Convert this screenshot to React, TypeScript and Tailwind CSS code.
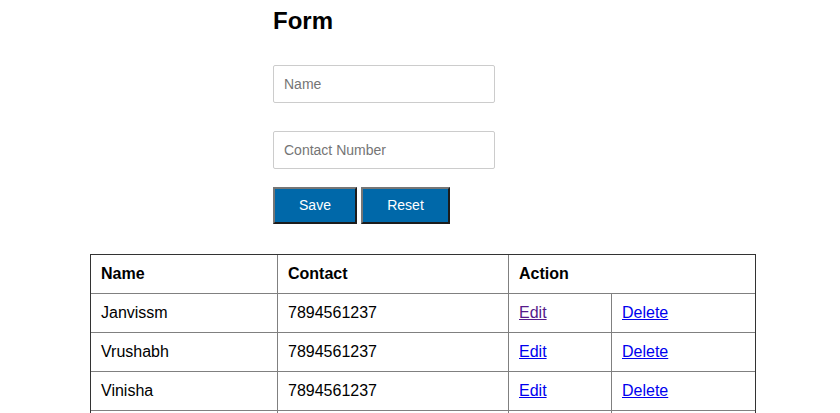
const rows = [
  { name: 'Janvissm', contact: '7894561237', visited: true },
  { name: 'Vrushabh', contact: '7894561237', visited: false },
  { name: 'Vinisha', contact: '7894561237', visited: false },
  { name: 'Sakshi', contact: '7894561237', visited: false },
]

export default function App() {
  return (
    <div className="min-h-[413px] bg-white font-['Liberation_Sans',Arial,sans-serif] text-black">
      <div className="mx-auto w-[294px] pt-[7px]">
        <h2 className="text-[24px] font-bold leading-[28px]">Form</h2>
        <form className="mt-[30px] flex flex-col" onSubmit={(e) => e.preventDefault()}>
          <input
            type="text"
            placeholder="Name"
            className="h-[38px] w-[222px] rounded-[2px] border border-[#ccc] px-[10px] text-[14px] outline-none placeholder:text-[#757575]"
          />
          <input
            type="text"
            placeholder="Contact Number"
            className="mt-[28px] h-[38px] w-[222px] rounded-[2px] border border-[#ccc] px-[10px] text-[14px] outline-none placeholder:text-[#757575]"
          />
          <div className="mt-[18px] flex gap-[4px]">
            <button
              type="submit"
              className="h-[37px] w-[84px] border-2 border-t-[#767676] border-l-[#767676] border-b-[#1c1c1c] border-r-[#1c1c1c] bg-[#0068a9] text-[14px] text-white"
            >
              Save
            </button>
            <button
              type="reset"
              className="h-[37px] w-[89px] border-2 border-t-[#767676] border-l-[#767676] border-b-[#1c1c1c] border-r-[#1c1c1c] bg-[#0068a9] text-[14px] text-white"
            >
              Reset
            </button>
          </div>
        </form>
      </div>

      <div className="ml-[90px] mt-[30px] w-[666px] border border-[#333]">
        <table className="w-full border-separate border-spacing-0 text-left text-[16px]">
          <thead>
            <tr>
              <th className="h-[39px] w-[187px] border-b border-r border-[#808080] px-[10px] py-0 font-bold">Name</th>
              <th className="h-[39px] w-[231px] border-b border-r border-[#808080] px-[10px] py-0 font-bold">Contact</th>
              <th colSpan={2} className="h-[39px] border-b border-[#808080] px-[10px] py-0 font-bold">Action</th>
            </tr>
          </thead>
          <tbody>
            {rows.map((row) => (
              <tr key={row.name}>
                <td className="h-[39px] border-b border-r border-[#808080] px-[10px] py-0">{row.name}</td>
                <td className="h-[39px] border-b border-r border-[#808080] px-[10px] py-0">{row.contact}</td>
                <td className="h-[39px] w-[103px] border-b border-r border-[#808080] px-[10px] py-0">
                  <a href="#" className={row.visited ? 'text-[#551a8b] underline' : 'text-[#0000ee] underline'}>
                    Edit
                  </a>
                </td>
                <td className="h-[39px] border-b border-[#808080] px-[10px] py-0">
                  <a href="#" className="text-[#0000ee] underline">
                    Delete
                  </a>
                </td>
              </tr>
            ))}
          </tbody>
        </table>
      </div>
    </div>
  )
}
